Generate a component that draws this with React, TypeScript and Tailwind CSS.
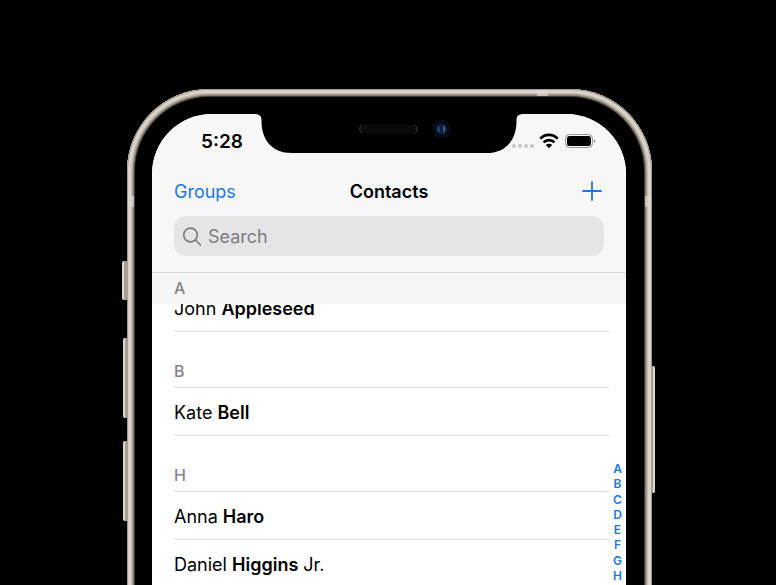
import React from "react";

type Contact = { first: string; last: string; suffix?: string };
type Section = { letter: string; contacts: Contact[] };

const pinned: Contact = { first: "John", last: "Appleseed" };

const sections: Section[] = [
  { letter: "B", contacts: [{ first: "Kate", last: "Bell" }] },
  {
    letter: "H",
    contacts: [
      { first: "Anna", last: "Haro" },
      { first: "Daniel", last: "Higgins", suffix: "Jr." },
    ],
  },
];

const indexLetters = ["A", "B", "C", "D", "E", "F", "G", "H"];

function Notch() {
  return (
    <svg
      className="absolute left-1/2 top-0 -translate-x-1/2"
      width="270"
      height="40"
      viewBox="0 0 270 40"
      aria-hidden="true"
    >
      <path
        d="M0 0C6 0 7.500 2 7.500 7C7.500 26 18 39 38 39H232C252 39 262.500 26 262.500 7C262.500 2 264 0 270 0Z"
        fill="#000"
      />
      <rect x="105.500" y="10.500" width="58" height="9" rx="4.500" fill="#0b0b0c" />
      <path d="M108 11C105 12.500 105 17.500 108 19M161 11C164 12.500 164 17.500 161 19" stroke="#3c3c3e" strokeWidth="1" fill="none" />
      <circle cx="187.500" cy="15" r="9.500" fill="#080b14" />
      <circle cx="187.500" cy="15" r="5.500" fill="#0d1e3c" />
      <path d="M185.500 11.500C182.500 13 182.500 17 185.500 18.500C187 17 184.500 14 185.500 11.500Z" fill="#2b4a78" />
      <path d="M188.500 11C192.500 12 192.500 17 189.500 19C188 17 190.500 14 188.500 11Z" fill="#34598c" />
    </svg>
  );
}

function StatusIcons() {
  return (
    <svg width="86" height="18" viewBox="0 0 86 18" role="img" aria-label="No signal, Wi-Fi on, battery full">
      <g fill="#c5c5c7">
        <circle cx="3" cy="14" r="2" />
        <circle cx="9" cy="14" r="2" />
        <circle cx="15" cy="14" r="2" />
        <circle cx="21" cy="14" r="2" />
      </g>
      <g fill="none" stroke="#000" strokeWidth="2.600">
        <path d="M29.200 6.700A12 12 0 0 1 46.800 6.700" />
        <path d="M32.500 10.400A7.800 7.800 0 0 1 43.500 10.400" />
      </g>
      <path d="M34.800 13A4.600 4.600 0 0 1 41.200 13L38 16.200Z" fill="#000" />
      <rect x="54.500" y="2.500" width="27" height="13" rx="4" fill="none" stroke="#969698" />
      <rect x="56" y="4" width="24" height="10" rx="2.500" fill="#000" />
      <path d="M83 7V11C84.800 10.300 84.800 7.700 83 7Z" fill="#8c8c8e" />
    </svg>
  );
}

function ContactRow({ contact }: { contact: Contact }) {
  return (
    <li className="flex h-12 items-center border-b border-[#e1e1e3] pt-[2px]">
      <a href="#contact" className="text-lg leading-6 text-black">
        {contact.first} <span className="font-semibold">{contact.last}</span>
        {contact.suffix ? ` ${contact.suffix}` : ""}
      </a>
    </li>
  );
}

function Hardware() {
  return (
    <div aria-hidden="true">
      <div className="absolute -left-[5px] top-[172px] h-[39px] w-[6px] rounded-l-xs border-l-2 border-[#dcd7cf] bg-[#a69e93]" />
      <div className="absolute -left-[4px] top-[249px] h-[80px] w-[5px] rounded-l-xs border-l-2 border-[#dcd7cf] bg-[#a69e93]" />
      <div className="absolute -left-[4px] top-[352px] h-[80px] w-[5px] rounded-l-xs border-l-2 border-[#dcd7cf] bg-[#a69e93]" />
      <div className="absolute -right-[3px] top-[277px] h-[127px] w-[4px] rounded-r-xs border-r-2 border-[#dcd7cf] bg-[#a69e93]" />
      <div className="absolute right-[104px] top-px h-[6px] w-[11px] bg-[#dcd9d3]/70" />
      <div className="absolute left-px top-[107px] h-[11px] w-[6px] bg-[#dcd9d3]/70" />
      <div className="absolute right-px top-[107px] h-[11px] w-[6px] bg-[#dcd9d3]/70" />
    </div>
  );
}

export default function App() {
  return (
    <main className="flex h-screen justify-center overflow-hidden bg-black pl-[3px] pt-[89px] font-['Inter','Liberation_Sans',sans-serif]">
      <div className="relative -mb-24 flex w-full max-w-[525px] flex-col rounded-[82px] bg-black py-[25px] pl-[25px] pr-[26px] shadow-[inset_0_0_0_1px_#a09a90,inset_0_0_0_4px_#d9d3c9,inset_0_0_0_5px_#c4bcb0,inset_0_0_0_6px_#a59d91,inset_0_0_0_7px_#857d73,inset_0_0_0_8px_#3f3b37]">
        <Hardware />
        <div className="relative flex min-h-0 flex-1 flex-col overflow-hidden rounded-[60px] bg-white">
          <Notch />
          <header className="border-b border-[#d6d6d8] bg-[#f7f7f7] px-[22px] pb-4">
            <div className="flex h-[54px] items-center justify-between pl-[27px] pr-[7px]">
              <time className="pt-px text-[19px] font-semibold leading-6 text-black">5:28</time>
              <StatusIcons />
            </div>
            <nav className="grid h-12 grid-cols-3 items-center text-lg leading-6">
              <button type="button" className="justify-self-start text-[#1a78e6]">
                Groups
              </button>
              <h1 className="justify-self-center font-semibold text-black">Contacts</h1>
              <button type="button" aria-label="Add contact" className="justify-self-end pb-[2px] pr-[2px] text-[#1a78e6]">
                <svg width="20" height="20" viewBox="0 0 20 20" stroke="currentColor" strokeWidth="1.800" strokeLinecap="round">
                  <path d="M10 1V19M1 10H19" />
                </svg>
              </button>
            </nav>
            <label className="flex h-10 items-center gap-[6px] rounded-xl bg-[#e5e5e8] px-2 pt-[2px]">
              <svg width="20" height="20" viewBox="0 0 20 20" fill="none" stroke="#7d7d82" strokeWidth="1.700" strokeLinecap="round">
                <circle cx="8.500" cy="8" r="6.800" />
                <path d="M13.500 13L18.500 18" />
              </svg>
              <input
                type="search"
                aria-label="Search"
                placeholder="Search"
                className="min-w-0 flex-1 bg-transparent text-lg leading-6 text-black outline-none placeholder:text-[#7d7d82]"
              />
            </label>
          </header>
          <h2 className="flex h-[31px] shrink-0 items-center bg-[#f6f6f6] px-[22px] pb-px text-base font-medium leading-5 text-[#85858a]">
            A
          </h2>
          <div className="flex min-h-0 flex-1 overflow-hidden pl-[22px]">
            <div className="-mt-5 min-w-0 flex-1">
              <ul>
                <ContactRow contact={pinned} />
              </ul>
              {sections.map((section) => (
                <section key={section.letter}>
                  <h2 className="flex h-14 items-end border-b border-[#dcdcde] pb-[6px] text-base font-medium leading-5 text-[#85858a]">
                    {section.letter}
                  </h2>
                  <ul>
                    {section.contacts.map((contact) => (
                      <ContactRow key={contact.last} contact={contact} />
                    ))}
                  </ul>
                </section>
              ))}
            </div>
            <nav aria-label="Index" className="mt-[157px] flex h-[122px] w-[17px] flex-col items-center justify-between text-xs font-semibold text-[#1a78e6]">
              {indexLetters.map((letter) => (
                <a key={letter} href="#index" className="leading-[15px]">
                  {letter}
                </a>
              ))}
            </nav>
          </div>
        </div>
      </div>
    </main>
  );
}
